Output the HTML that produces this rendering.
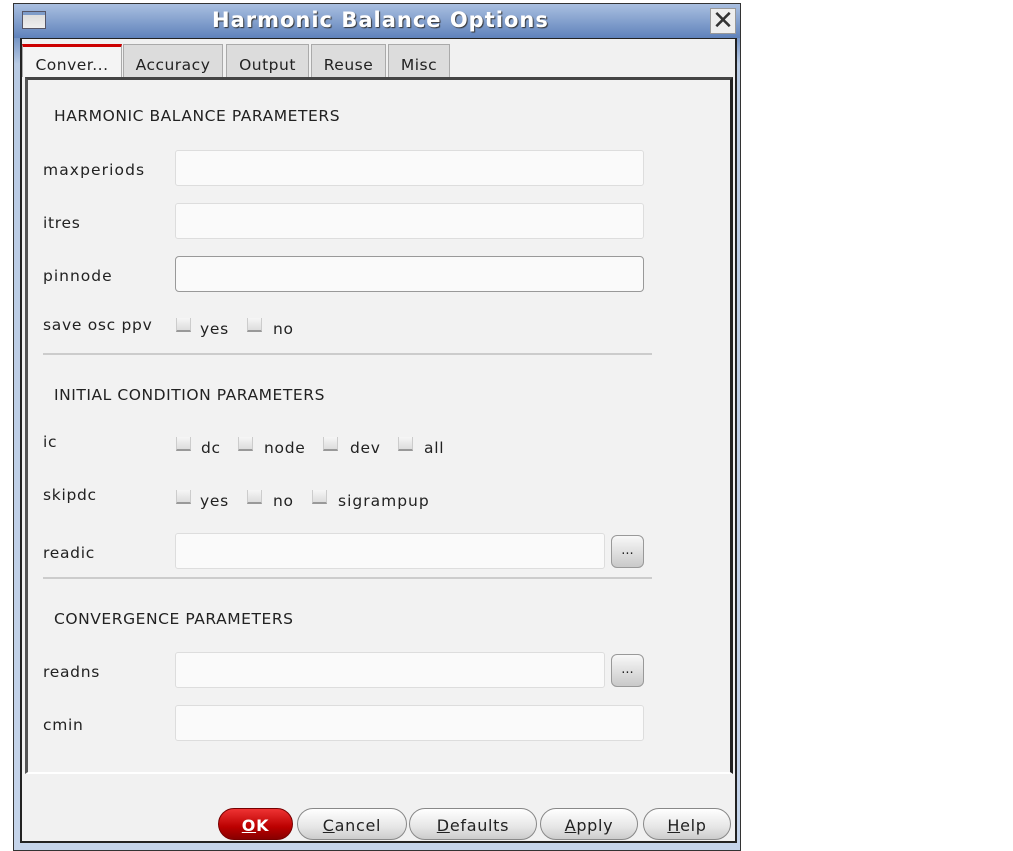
<!DOCTYPE html>
<html><head><style>
*{box-sizing:border-box;margin:0;padding:0}
body{width:1013px;height:851px;background:#fff;position:relative;overflow:hidden;font-family:"DejaVu Sans","Liberation Sans",sans-serif;font-size:15.5px;color:#222;letter-spacing:0.7px}
.a{position:absolute}
.win{left:13px;top:3px;width:728px;height:848px;background:linear-gradient(#9fb6d8,#6b8cc0 30px,#b9cbe4 60px,#c5d4ea);border:1px solid #333}
.title{left:14px;top:4px;width:726px;height:34px;background:linear-gradient(#a9bfe0,#5f82bb);}
.body{left:20px;top:38px;width:717px;height:805px;background:#f1f1f1;border:2px solid #222;border-top:1px solid #222}
.tab{top:44px;height:33px;background:#dcdcdc;border:1px solid #aaa;border-bottom:none;text-align:center;line-height:40px;letter-spacing:0.5px}
.panel{left:25px;top:77px;width:708px;height:697px;background:#f2f2f2;border-top:3px solid #444;border-left:3px solid #555;border-right:3px solid #222;border-bottom:2px solid #fff}
.in{left:175px;width:469px;height:36px;background:#fafafa;border:1px solid #ddd;border-radius:3px}
.cb{width:15px;height:14px;background:linear-gradient(#f6f6f6,#ddd);border-bottom:2px solid #999;border-left:1px solid #ccc;border-right:1px solid #ccc}
.hr{left:43px;width:609px;height:2px;background:#ccc}
.btn{top:808px;height:32px;border:1px solid #888;border-radius:16px;background:linear-gradient(#fff,#e6e6e6 60%,#ccc);text-align:center;line-height:34px;font-size:16px}
.dots{left:611px;width:33px;height:33px;border:1px solid #999;border-radius:6px;background:linear-gradient(#f8f8f8,#c9c9c9);text-align:center;line-height:30px;font-size:13px;letter-spacing:0}
u{text-decoration:underline}
</style></head><body>
<div class="a win"></div>
<div class="a title"></div>
<div class="a" style="left:22px;top:11px;width:24px;height:18px;background:linear-gradient(#7e9cc9 3px,#ddd 3px,#eee);border:1px solid #556"></div>
<div class="a" style="left:212px;top:8px;color:#fff;font-weight:bold;font-size:21px;text-shadow:1px 1px 1px #333;letter-spacing:1px">Harmonic Balance Options</div>
<div class="a" style="left:710px;top:8px;width:26px;height:26px;background:#eee;border:1px solid #999;font-size:26px;line-height:24px;text-align:center;color:#333;font-weight:bold;letter-spacing:0">✕</div>
<div class="a body"></div>
<div class="a tab" style="left:22px;width:100px;background:#f4f4f4;border-top:3px solid #c00;line-height:36px">Conver...</div>
<div class="a tab" style="left:123px;width:100px">Accuracy</div>
<div class="a tab" style="left:226px;width:83px">Output</div>
<div class="a tab" style="left:311px;width:75px">Reuse</div>
<div class="a tab" style="left:388px;width:62px">Misc</div>
<div class="a panel"></div>

<div class="a" style="left:54px;top:107px;letter-spacing:0.55px">HARMONIC BALANCE PARAMETERS</div>
<div class="a" style="left:43px;top:161px;letter-spacing:1.1px">maxperiods</div><div class="a in" style="top:150px"></div>
<div class="a" style="left:43px;top:214px">itres</div><div class="a in" style="top:203px"></div>
<div class="a" style="left:43px;top:267px;letter-spacing:1px">pinnode</div><div class="a in" style="top:256px;border:1px solid #999;border-radius:4px"></div>
<div class="a" style="left:43px;top:316px">save osc ppv</div>
<div class="a cb" style="left:176px;top:318px"></div><div class="a" style="left:200px;top:320px">yes</div>
<div class="a cb" style="left:247px;top:318px"></div><div class="a" style="left:273px;top:320px">no</div>
<div class="a hr" style="top:353px"></div>

<div class="a" style="left:54px;top:386px;letter-spacing:0.55px">INITIAL CONDITION PARAMETERS</div>
<div class="a" style="left:43px;top:433px">ic</div>
<div class="a cb" style="left:176px;top:437px"></div><div class="a" style="left:201px;top:439px">dc</div>
<div class="a cb" style="left:238px;top:437px"></div><div class="a" style="left:264px;top:439px">node</div>
<div class="a cb" style="left:323px;top:437px"></div><div class="a" style="left:350px;top:439px">dev</div>
<div class="a cb" style="left:398px;top:437px"></div><div class="a" style="left:424px;top:439px">all</div>
<div class="a" style="left:43px;top:486px">skipdc</div>
<div class="a cb" style="left:176px;top:490px"></div><div class="a" style="left:200px;top:492px">yes</div>
<div class="a cb" style="left:247px;top:490px"></div><div class="a" style="left:273px;top:492px">no</div>
<div class="a cb" style="left:312px;top:490px"></div><div class="a" style="left:338px;top:492px;letter-spacing:1px">sigrampup</div>
<div class="a" style="left:43px;top:544px">readic</div><div class="a in" style="top:533px;width:430px"></div>
<div class="a dots" style="top:535px">...</div>
<div class="a hr" style="top:577px"></div>

<div class="a" style="left:54px;top:610px;letter-spacing:0.55px">CONVERGENCE PARAMETERS</div>
<div class="a" style="left:43px;top:663px">readns</div><div class="a in" style="top:652px;width:430px"></div>
<div class="a dots" style="top:654px">...</div>
<div class="a" style="left:43px;top:716px">cmin</div><div class="a in" style="top:705px"></div>

<div class="a btn" style="left:218px;width:75px;background:linear-gradient(#e33,#b00 60%,#800);color:#fff;font-weight:bold;border-color:#700"><u>O</u>K</div>
<div class="a btn" style="left:297px;width:110px"><u>C</u>ancel</div>
<div class="a btn" style="left:409px;width:128px"><u>D</u>efaults</div>
<div class="a btn" style="left:540px;width:98px"><u>A</u>pply</div>
<div class="a btn" style="left:643px;width:88px"><u>H</u>elp</div>
</body></html>
